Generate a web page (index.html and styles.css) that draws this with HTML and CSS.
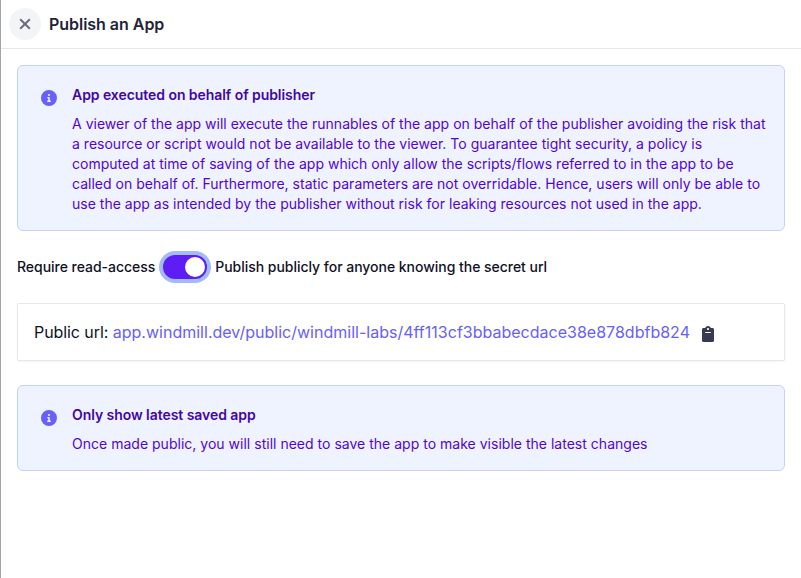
FILE: index.html
```html
<!DOCTYPE html>
<html lang="en">
<head>
<meta charset="utf-8">
<title>Publish an App</title>
<link rel="stylesheet" href="styles.css">
</head>
<body>
<div class="drawer">
  <header class="header">
    <button class="close" aria-label="Close">
      <svg width="20" height="20" viewBox="0 0 20 20"><path d="M5.2 5.2l9.6 9.6M14.8 5.2l-9.6 9.6" fill="none" stroke="currentColor" stroke-width="2"/></svg>
    </button>
    <h1 class="title">Publish an App</h1>
  </header>
  <main class="content">
    <section class="alert">
      <svg class="info" width="16" height="16" viewBox="0 0 512 512"><path fill="currentColor" fill-rule="evenodd" d="M256 0a256 256 0 1 0 0 512 256 256 0 0 0 0-512zm0 128a32 32 0 1 1 0 64 32 32 0 0 1 0-64zm40 256h-80c-13 0-24-11-24-24s11-24 24-24h16v-64h-8c-13 0-24-11-24-24s11-24 24-24h32c13 0 24 11 24 24v88h16c13 0 24 11 24 24s-11 24-24 24z"/></svg>
      <div class="alert-text">
        <h2>App executed on behalf of publisher</h2>
        <p>A viewer of the app will execute the runnables of the app on behalf of the publisher avoiding the risk that a resource or script would not be available to the viewer. To guarantee tight security, a policy is computed at time of saving of the app which only allow the scripts/flows referred to in the app to be called on behalf of. Furthermore, static parameters are not overridable. Hence, users will only be able to use the app as intended by the publisher without risk for leaking resources not used in the app.</p>
      </div>
    </section>
    <div class="access">
      <span class="label">Require read-access</span>
      <span class="toggle"><span class="knob"></span></span>
      <span class="label">Publish publicly for anyone knowing the secret url</span>
    </div>
    <div class="url-box">
      <span><span class="url-label">Public url:</span> <a class="link">app.windmill.dev/public/windmill-labs/4ff113cf3bbabecdace38e878dbfb824</a></span>
      <svg class="clipboard" width="12" height="16" viewBox="0 0 384 512"><path fill="currentColor" fill-rule="evenodd" d="M336 64h-53.900C268 27 233 0 192 0s-76 27-90 64H48C22 64 0 86 0 112v352c0 26 22 48 48 48h288c27 0 48-22 48-48V112c0-26-21-48-48-48zM192 64c18 0 32 14 32 32s-14 32-32 32-32-14-32-32 14-32 32-32zm80 160H112c-9 0-16-7-16-16s7-16 16-16h160c9 0 16 7 16 16s-7 16-16 16z"/></svg>
    </div>
    <section class="alert">
      <svg class="info" width="16" height="16" viewBox="0 0 512 512"><path fill="currentColor" fill-rule="evenodd" d="M256 0a256 256 0 1 0 0 512 256 256 0 0 0 0-512zm0 128a32 32 0 1 1 0 64 32 32 0 0 1 0-64zm40 256h-80c-13 0-24-11-24-24s11-24 24-24h16v-64h-8c-13 0-24-11-24-24s11-24 24-24h32c13 0 24 11 24 24v88h16c13 0 24 11 24 24s-11 24-24 24z"/></svg>
      <div class="alert-text">
        <h2>Only show latest saved app</h2>
        <p>Once made public, you will still need to save the app to make visible the latest changes</p>
      </div>
    </section>
  </main>
</div>
</body>
</html>
```
FILE: styles.css
```css
* { box-sizing: border-box; margin: 0; }
body { font-family: Inter, sans-serif; background: #fff; color: #0f1127; }
svg { display: block; flex: none; }
.drawer { height: 578px; border-left: 1px solid #a5a5a5; }
.header { display: flex; align-items: center; gap: 8px; height: 49px; padding: 0 8px; border-bottom: 1px solid #e5e7eb; }
.close { display: flex; align-items: center; justify-content: center; width: 32px; height: 32px; padding: 0; border: 0; border-radius: 50%; background: #f3f4f6; color: #6b6b80; }
.title { font-size: 16px; line-height: 24px; font-weight: 600; letter-spacing: -0.03px; color: #1f2437; }
.content { padding: 16px; }
.alert { display: flex; gap: 15px; padding: 19px 16px 16px 23px; background: #eff3ff; border: 1px solid #c3d2fd; border-radius: 6px; }
.info { margin-top: 5px; color: #6760fb; }
.alert-text { flex: 1; font-size: 14px; line-height: 20px; letter-spacing: 0.015px; color: #5204d8; }
.alert-text h2 { font-size: 14px; line-height: 20px; font-weight: 600; letter-spacing: -0.06px; color: #4206a8; margin-bottom: 9px; }
.access { display: flex; align-items: center; gap: 8px; height: 24px; margin: 24px 0; }
.label { font-size: 14px; line-height: 20px; font-weight: 500; letter-spacing: -0.03px; white-space: nowrap; }
.toggle { display: flex; justify-content: flex-end; width: 44px; height: 24px; padding: 2px; border-radius: 12px; background: #5f1df5; box-shadow: 0 0 0 4px #a2bbfc; }
.knob { width: 20px; height: 20px; border-radius: 50%; background: #fff; }
.url-box { display: flex; align-items: center; gap: 12px; height: 58px; margin-bottom: 24px; padding: 0 16px; border: 1px solid #e5e7eb; border-radius: 2px; box-shadow: 0 1px 2px rgba(0,0,0,.05); font-size: 16px; line-height: 24px; white-space: nowrap; }
.url-label { letter-spacing: -0.08px; }
.link { letter-spacing: 0.01px; color: #6760fb; }
.clipboard { color: #373a50; margin-top: 3px; }
```
